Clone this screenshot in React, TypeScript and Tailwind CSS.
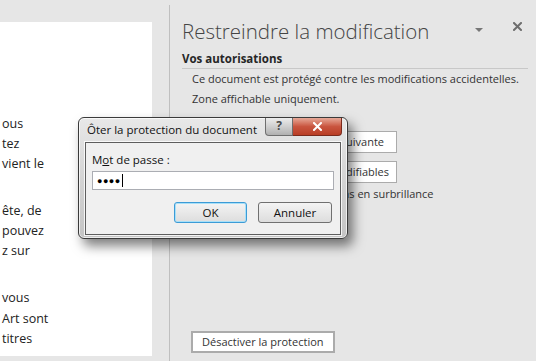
const docLines = [
  { text: "ous", top: 115 },
  { text: "tez", top: 135 },
  { text: "vient le", top: 155 },
  { text: "ête, de", top: 202 },
  { text: "pouvez", top: 222 },
  { text: "z sur", top: 242 },
  { text: "vous", top: 289 },
  { text: "Art sont", top: 310 },
  { text: "titres", top: 330 },
];

const ui = { fontFamily: '"Open Sans", "Noto Sans", sans-serif' };

const CloseGlyph = ({ className }: { className?: string }) => (
  <svg width="9" height="9" viewBox="0 0 9 9" className={className}>
    <path d="M1 1 L8 8 M8 1 L1 8" stroke="currentColor" strokeWidth="2" strokeLinecap="square" />
  </svg>
);

const PasswordDialog = () => (
  <div
    className="absolute left-[78px] top-[117px] h-[122px] w-[270px] rounded-[6px] border border-[#3a3a3a] bg-gradient-to-b from-[#e8e8e8] via-[#d4d4d4] to-[#c4c4c4] shadow-[inset_0_0_0_1px_rgba(255,255,255,0.7),5px_7px_12px_rgba(0,0,0,0.5)]"
    style={ui}
  >
    <div className="flex h-[24px] items-start">
      <span className="whitespace-nowrap pl-[8px] pt-[4px] text-[11.5px] leading-[16px] text-[#111]">
        Ôter la protection du document
      </span>
      <div className="ml-auto mr-[5px] flex">
        <div className="flex h-[18px] w-[28px] items-center justify-center rounded-bl-[4px] border border-t-0 border-[#6e6e6e] bg-gradient-to-b from-[#ececec] via-[#cfcfcf] to-[#b0b0b0] pb-[1px] text-[12px] font-bold leading-none text-[#4a4a4a]">
          ?
        </div>
        <div className="flex h-[18px] w-[49px] items-center justify-center rounded-br-[4px] border border-l-0 border-t-0 border-[#7a2a1c] bg-gradient-to-b from-[#e6a898] via-[#c9553f] to-[#b83d24]">
          <CloseGlyph className="text-white" />
        </div>
      </div>
    </div>
    <div className="mx-[6px] h-[93px] border border-[#5e5e5e] bg-[#f0f0f0] px-[6px] pt-[9px] shadow-[0_0_0_1px_rgba(255,255,255,0.8)]">
      <p className="text-[11.5px] leading-[16px] text-[#111]">
        M<span className="underline">o</span>t de passe :
      </p>
      <div className="mt-[3px] flex h-[19px] items-center border border-[#abadb3] bg-white pl-[4px]">
        <span className="text-[9px] tracking-[0.5px] text-black">●●●●</span>
        <span className="ml-[1px] h-[13px] w-px bg-black" />
      </div>
      <div className="mt-[12px] flex justify-end gap-[11px] pr-[2px]">
        <button className="h-[21px] w-[73px] rounded-[3px] border border-[#3c9bd6] bg-gradient-to-b from-[#f4f4f4] to-[#dddddd] text-[11.5px] text-[#111] shadow-[inset_0_0_0_1px_#a8e0f8]">
          OK
        </button>
        <button className="h-[21px] w-[74px] rounded-[3px] border border-[#707070] bg-gradient-to-b from-[#f4f4f4] to-[#dddddd] text-[11.5px] text-[#111]">
          Annuler
        </button>
      </div>
    </div>
  </div>
);

export default function App() {
  return (
    <div className="relative flex h-[361px] w-[536px] overflow-hidden bg-[#e6e6e6]" style={ui}>
      {/* document area */}
      <div className="w-[169px] shrink-0 pt-[22px]">
        <div className="relative h-[334px] w-[152px] bg-white">
          {docLines.map((l) => (
            <span
              key={l.top}
              className="absolute left-[2px] whitespace-nowrap text-[12.5px] leading-[18px] text-[#222]"
              style={{ top: l.top - 22 }}
            >
              {l.text}
            </span>
          ))}
        </div>
      </div>
      <div className="mt-[5px] w-px shrink-0 bg-[#bfbfbf]" />

      {/* task pane */}
      <div className="flex flex-1 flex-col pl-[12px] pr-[8px] text-[11px] text-[#333]">
        <div className="flex items-start pt-[17px]">
          <h1 className="whitespace-nowrap text-[20.5px] font-light leading-[28px] text-[#444]">
            Restreindre la modification
          </h1>
          <span className="ml-auto mt-[11px] h-0 w-0 border-x-[4px] border-t-[4px] border-x-transparent border-t-[#777]" />
          <CloseGlyph className="ml-[30px] mr-[6px] mt-[5px] text-[#6e6e6e]" />
        </div>
        <p className="mt-[6px] border-b border-[#c8c8c8] pb-[1px] text-[11.5px] font-bold leading-[16px] text-[#262626]">
          Vos autorisations
        </p>
        <div className="pl-[10px] leading-[20px]">
          <p className="whitespace-nowrap">Ce document est protégé contre les modifications accidentelles.</p>
          <p>Zone affichable uniquement.</p>
        </div>
        <div className="mt-[22px] flex w-[215px] flex-col items-end gap-[8px] pl-[10px]">
          <div className="flex h-[22px] shrink-0 items-center whitespace-nowrap border border-[#ababab] bg-white pl-[12px] pr-[12px]">
            Atteindre la région suivante
          </div>
          <div className="flex h-[22px] shrink-0 items-center whitespace-nowrap border border-[#ababab] bg-white pl-[8px] pr-[7px]">
            Afficher toutes les régions modifiables
          </div>
        </div>
        <label className="mt-[3px] flex items-center gap-[5px] whitespace-nowrap pl-[63px]">
          <span className="h-[12px] w-[12px] border border-[#888] bg-white" />
          Mettre les régions en surbrillance
        </label>
        <div className="mb-[8px] mt-auto pl-[9px]">
          <button className="h-[22px] border-2 border-[#ababab] bg-white px-[9px] text-[11px] text-[#333]">
            Désactiver la protection
          </button>
        </div>
      </div>

      <PasswordDialog />
    </div>
  );
}
